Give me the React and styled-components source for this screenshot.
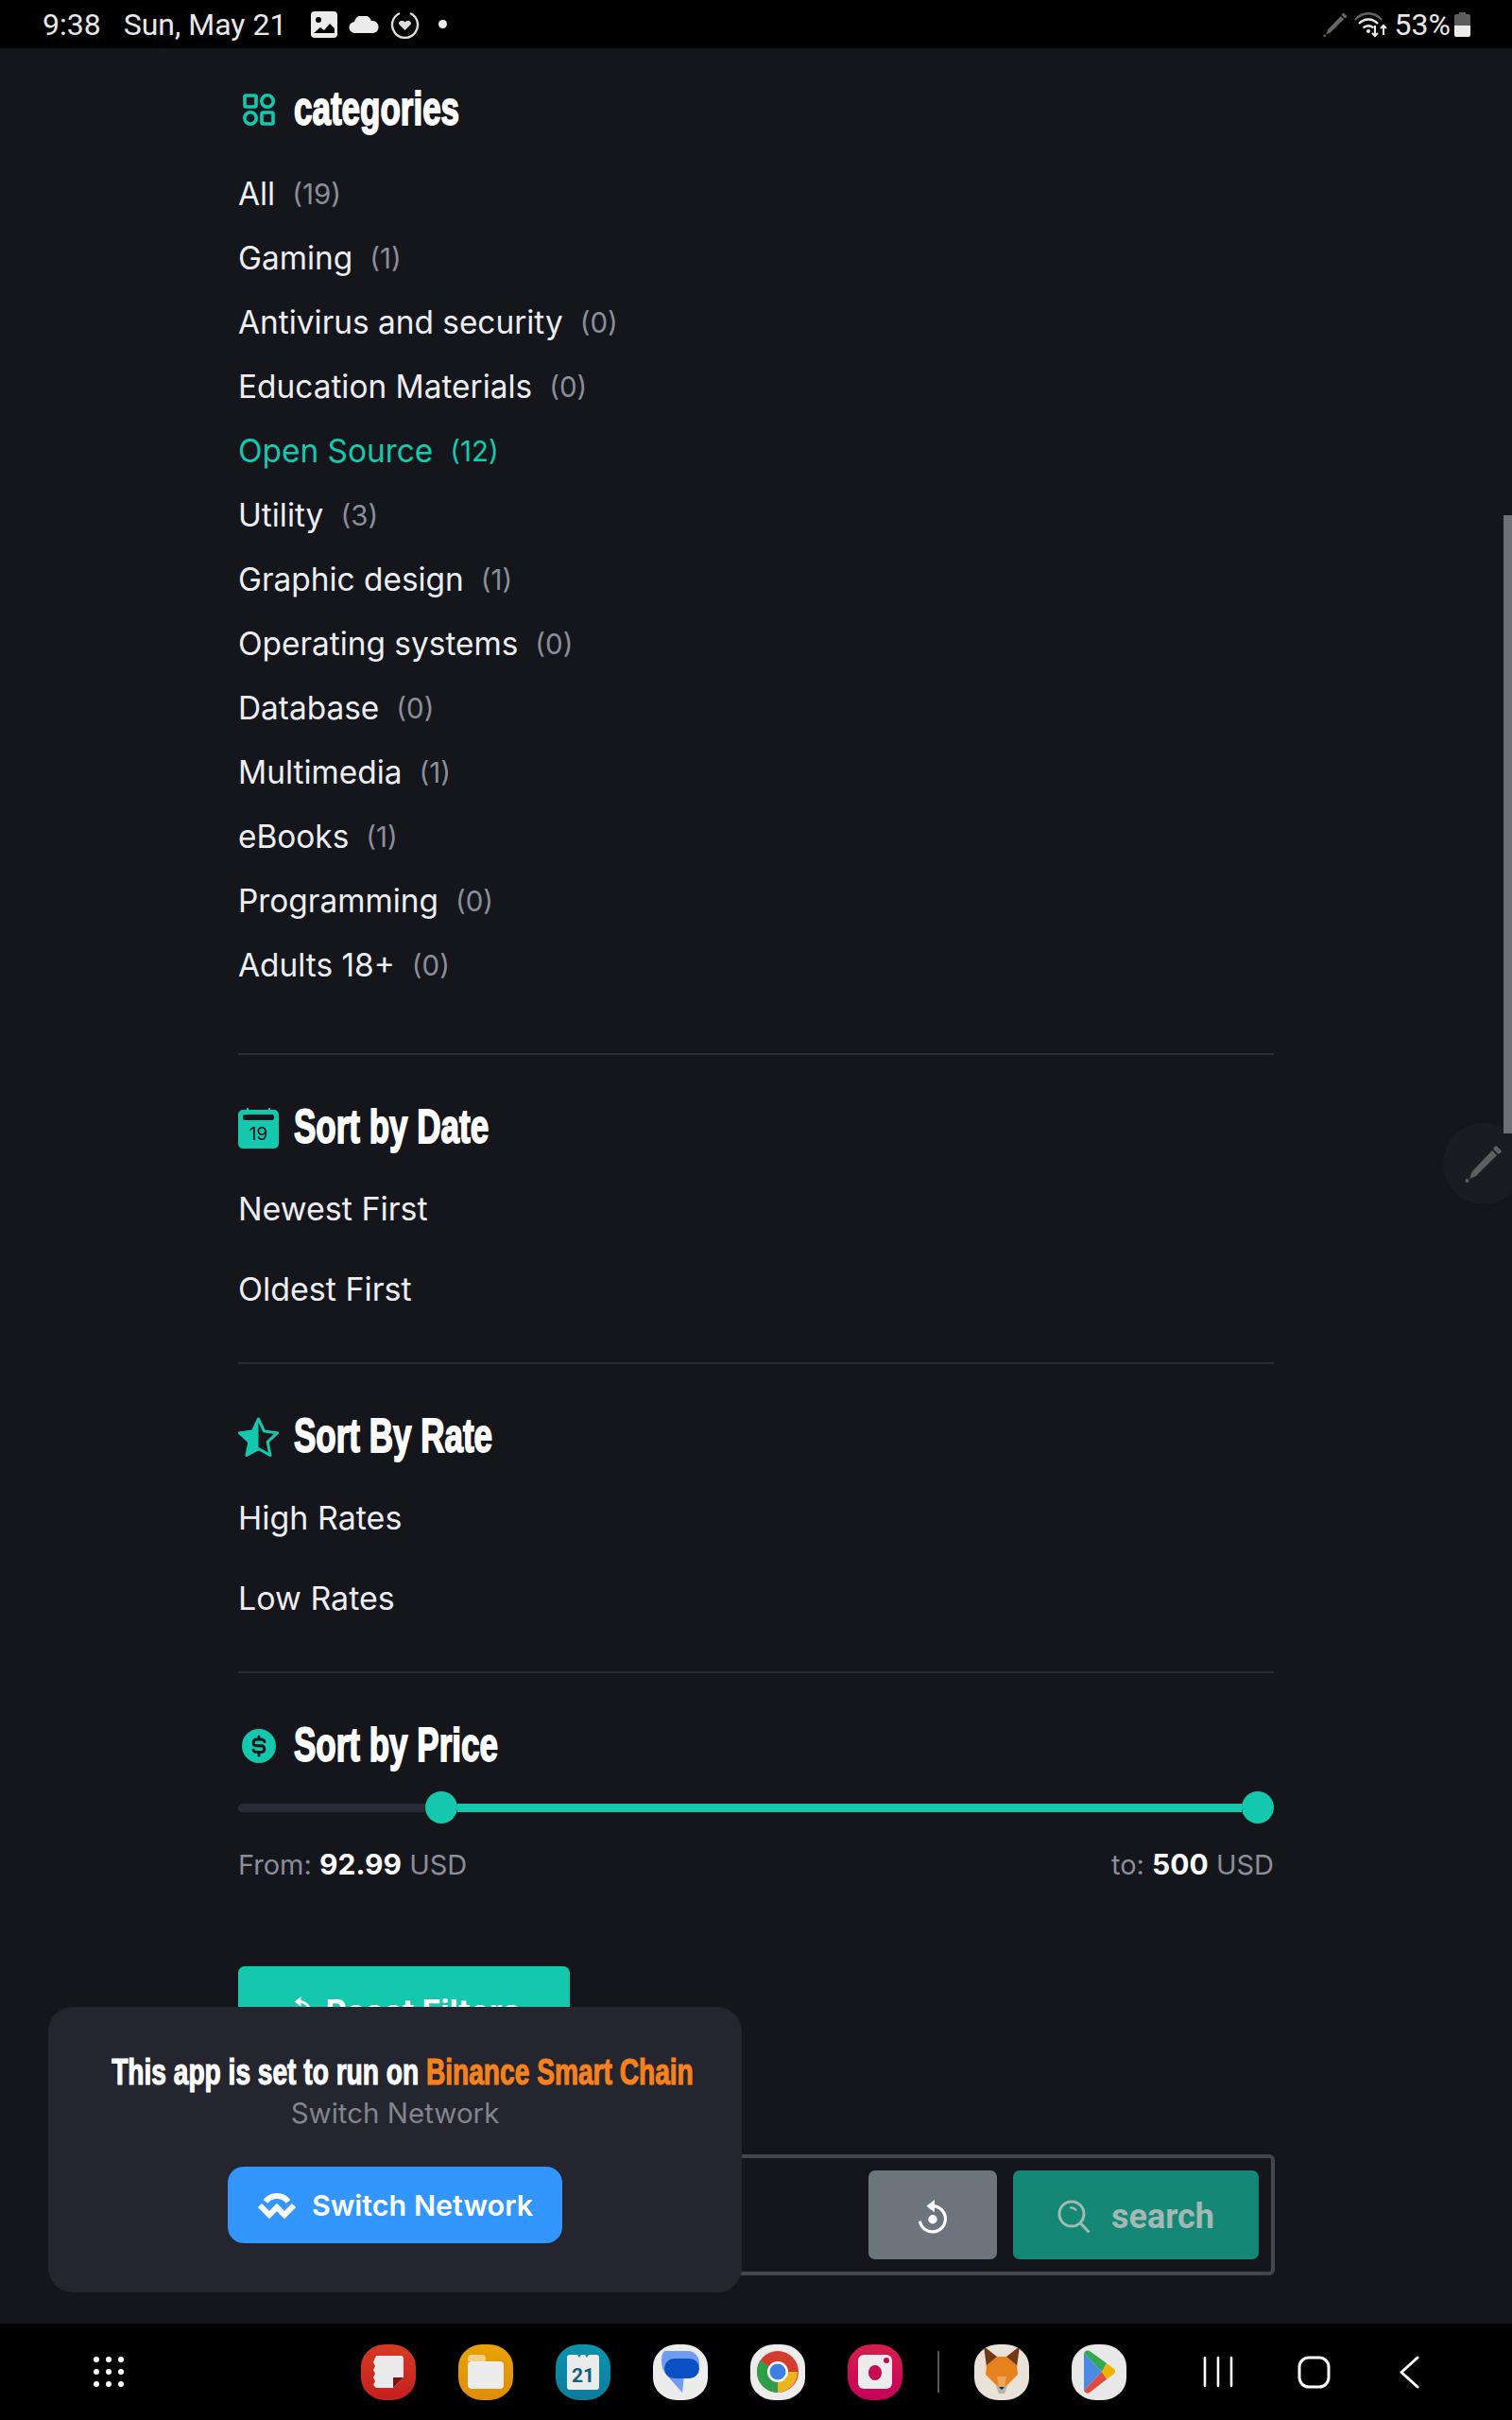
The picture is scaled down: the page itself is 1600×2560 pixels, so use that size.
import styled, { createGlobalStyle } from 'styled-components';

const teal = '#14c8ad';
const pageBg = '#15151c';

const Global = createGlobalStyle`
  html, body { margin: 0; padding: 0; background: ${pageBg}; }
  * { box-sizing: border-box; }
`;

const Screen = styled.div`
  position: relative;
  width: 1600px;
  height: 2560px;
  overflow: hidden;
  display: flex;
  flex-direction: column;
  background: ${pageBg};
  font-family: 'Inter', 'Liberation Sans', sans-serif;
  color: #eceef2;
`;

const StatusBar = styled.div`
  flex: none;
  height: 51px;
  padding: 0 44px 0 45px;
  background: #000;
  display: flex;
  align-items: center;
  justify-content: space-between;
  font-family: 'Roboto', sans-serif;
  font-size: 32px;
  color: #e8e8e8;
`;

const StatusGroup = styled.div`
  display: flex;
  align-items: center;
  gap: ${(p) => p.$gap || 0}px;
`;

const StatusDate = styled.span`
  margin: 0 26px 0 24px;
`;

const StatusDot = styled.i`
  width: 9px;
  height: 9px;
  margin-left: 8px;
  border-radius: 50%;
  background: #eee;
`;

const BatteryLabel = styled.span`
  margin-right: -3px;
`;

const Main = styled.main`
  flex: 1;
  min-height: 0;
  overflow: hidden;
  width: 1096px;
  margin-left: 252px;
`;

const Section = styled.section`
  padding: ${(p) => p.$top}px 0 ${(p) => p.$bottom}px;
  border-bottom: ${(p) => (p.$last ? 'none' : '2px solid #2b2c33')};
`;

const HeadingRow = styled.div`
  height: 60px;
  display: flex;
  align-items: center;
  gap: 16px;
  margin-bottom: ${(p) => p.$mb}px;
`;

const IconBox = styled.div`
  width: 43px;
  height: 43px;
  flex: none;
  display: flex;
  align-items: center;
  justify-content: center;
`;

const Heading = styled.h2`
  margin: -2px 0 0;
  font-family: 'Liberation Sans Narrow', 'Liberation Sans', sans-serif;
  font-weight: 700;
  font-size: 50px;
  line-height: 60px;
  color: #fff;
  white-space: nowrap;
  -webkit-text-stroke: 1.8px #fff;
  transform: scaleX(0.7);
  transform-origin: left center;
`;

const CategoryRow = styled.div`
  height: 68px;
  display: flex;
  align-items: center;
  gap: 18px;
  font-size: 33.4px;
  color: ${(p) => (p.$active ? teal : '#eceef2')};
`;

const Count = styled.span`
  font-size: 29.5px;
  color: ${(p) => (p.$active ? teal : '#8b8e99')};
`;

const SortRow = styled.div`
  height: 85px;
  display: flex;
  align-items: center;
  font-size: 34px;
  color: #eceef2;
`;

const Slider = styled.div`
  height: 34px;
  margin-top: 18px;
  display: flex;
  align-items: center;
`;

const TrackDim = styled.div`
  width: 198px;
  height: 9px;
  border-radius: 5px 0 0 5px;
  background: #2a2b36;
`;

const TrackActive = styled.div`
  flex: 1;
  height: 9px;
  background: ${teal};
`;

const Thumb = styled.div`
  width: 34px;
  height: 34px;
  border-radius: 50%;
  background: ${teal};
`;

const PriceRow = styled.div`
  margin-top: 25px;
  height: 36px;
  display: flex;
  align-items: center;
  justify-content: space-between;
  font-size: 29px;
  color: #8b8e99;
`;

const PriceValue = styled.b`
  font-size: 30px;
  font-weight: 700;
  color: #fff;
`;

const ResetFilters = styled.button`
  display: flex;
  align-items: center;
  justify-content: center;
  gap: 14px;
  width: 351px;
  height: 94px;
  margin-top: 90px;
  padding: 0;
  border: 0;
  border-radius: 7px;
  background: ${teal};
  font-family: inherit;
  font-size: 34px;
  font-weight: 700;
  color: #fff;
`;

const BottomNav = styled.nav`
  flex: none;
  height: 102px;
  background: #000;
  display: flex;
  align-items: center;
  padding-left: 99px;
`;

const DotGrid = styled.div`
  width: 32px;
  display: grid;
  grid-template-columns: repeat(3, 6px);
  justify-content: space-between;
  row-gap: 7px;
  margin-right: 251px;
`;

const Dot = styled.i`
  width: 6px;
  height: 6px;
  border-radius: 50%;
  background: #fff;
`;

const Dock = styled.div`
  display: flex;
  align-items: center;
  gap: 45px;
`;

const AppIcon = styled.div`
  width: 58px;
  height: 59px;
  border-radius: 44% / 40%;
  background: ${(p) => p.$bg};
  display: flex;
  align-items: center;
  justify-content: center;
  overflow: hidden;
`;

const DockDivider = styled.div`
  width: 2px;
  height: 44px;
  margin: 0 -8px;
  background: #555;
`;

const NavButtons = styled.div`
  display: flex;
  align-items: center;
  margin-left: 81px;
`;

const NavSlot = styled.div`
  display: flex;
  margin-right: ${(p) => p.$mr}px;
`;

const Popup = styled.div`
  position: absolute;
  left: 51px;
  top: 2123px;
  width: 734px;
  height: 302px;
  padding-top: 47px;
  border-radius: 26px;
  background: #24252e;
  z-index: 3;
  display: flex;
  flex-direction: column;
  align-items: center;
`;

const PopupTitle = styled.div`
  margin-left: 16px;
  font-family: 'Liberation Sans Narrow', 'Liberation Sans', sans-serif;
  font-weight: 700;
  font-size: 38px;
  line-height: 44px;
  color: #fff;
  white-space: nowrap;
  -webkit-text-stroke: 1.2px currentColor;
  transform: scaleX(0.74);
`;

const Orange = styled.span`
  color: #f5821f;
`;

const PopupSub = styled.div`
  margin-top: 1px;
  font-size: 29.5px;
  line-height: 40px;
  color: #82848e;
`;

const SwitchButton = styled.button`
  margin-top: 37px;
  width: 354px;
  height: 81px;
  padding: 0;
  border: 0;
  border-radius: 17px;
  background: #3396ff;
  color: #fff;
  font-family: inherit;
  font-size: 30.5px;
  font-weight: 600;
  display: flex;
  align-items: center;
  justify-content: center;
  gap: 16px;
`;

const SearchBar = styled.div`
  position: absolute;
  left: 600px;
  right: 251px;
  top: 2279px;
  height: 128px;
  padding-right: 13px;
  border: 4px solid #45464c;
  border-radius: 6px;
  background: ${pageBg};
  z-index: 2;
  display: flex;
  align-items: center;
  justify-content: flex-end;
  gap: 17px;
`;

const ClearButton = styled.button`
  width: 136px;
  height: 94px;
  padding: 6px 0 0;
  border: 0;
  border-radius: 7px;
  background: #6c757d;
  display: flex;
  align-items: center;
  justify-content: center;
`;

const SearchButton = styled.button`
  width: 260px;
  height: 94px;
  padding: 3px 0 0;
  border: 0;
  border-radius: 7px;
  background: #148875;
  color: #a4b8b4;
  font-family: 'Roboto', sans-serif;
  font-size: 36px;
  font-weight: 700;
  display: flex;
  align-items: center;
  justify-content: center;
  gap: 21px;
`;

const PenHandle = styled.div`
  position: absolute;
  left: 1527px;
  top: 1188px;
  width: 86px;
  height: 86px;
  border-radius: 50%;
  background: #1b1c21;
  display: flex;
  align-items: center;
  justify-content: center;
`;

const ScrollThumb = styled.div`
  position: absolute;
  left: 1591px;
  top: 545px;
  width: 9px;
  height: 654px;
  background: #6e6f75;
`;

const categories = [
  ['All', 19],
  ['Gaming', 1],
  ['Antivirus and security', 0],
  ['Education Materials', 0],
  ['Open Source', 12, true],
  ['Utility', 3],
  ['Graphic design', 1],
  ['Operating systems', 0],
  ['Database', 0],
  ['Multimedia', 1],
  ['eBooks', 1],
  ['Programming', 0],
  ['Adults 18+', 0],
];

const CategoriesIcon = () => (
  <svg width="36" height="36" viewBox="0 0 36 36" fill="none" stroke={teal} strokeWidth="3.6">
    <rect x="3" y="3" width="12" height="12" rx="1.5" />
    <circle cx="27" cy="9" r="6.2" />
    <circle cx="9" cy="27" r="6.2" />
    <rect x="21" y="21" width="12" height="12" rx="1.5" />
  </svg>
);

const CalendarIcon = () => (
  <svg width="43" height="43" viewBox="0 0 43 43">
    <path d="M9 0h2v2h21V0h2v2h4a5 5 0 0 1 5 5v31a5 5 0 0 1-5 5H5a5 5 0 0 1-5-5V7a5 5 0 0 1 5-5h4z" fill={teal} />
    <rect x="5" y="7" width="33" height="6" rx="2" fill={pageBg} />
    <text x="21.5" y="33.5" textAnchor="middle" fontFamily="Inter, sans-serif" fontSize="19" fill={pageBg}>19</text>
  </svg>
);

const StarIcon = () => (
  <svg width="43" height="43" viewBox="0 0 43 43">
    <path d="M21.5 2l6 13 14 1.8-10.3 9.6L34 40.5 21.5 33.6 9 40.5l2.8-14.1L1.5 16.8l14-1.8z" fill="none" stroke={teal} strokeWidth="3" strokeLinejoin="round" />
    <path d="M21.5 2l-6 13-14 1.8 10.3 9.6L9 40.5l12.5-6.9z" fill={teal} />
  </svg>
);

const DollarIcon = () => (
  <svg width="36" height="36" viewBox="0 0 36 36">
    <circle cx="18" cy="18" r="18" fill={teal} />
    <path d="M24 13.5c-.5-1.6-2-2.5-4-2.5h-4c-2.2 0-3.8 1.3-3.8 3.4s1.6 3.4 3.8 3.4h4c2.2 0 3.8 1.3 3.8 3.4S22.2 24.600 20 24.600h-4c-2 0-3.500-.9-4-2.500M18 8v3M18 24.600v3.400" fill="none" stroke={pageBg} strokeWidth="3" strokeLinecap="round" />
  </svg>
);

const ResetIcon = ({ size = 32, color = '#fff' }) => (
  <svg width={size} height={size * 1.18} viewBox="0 0 34 40" fill="none">
    <path d="M17 7a14.5 14.5 0 1 1-14.5 17" stroke={color} strokeWidth="3.4" />
    <path d="M19 0v14L10 7z" fill={color} />
    <circle cx="17" cy="22" r="5" fill={color} />
  </svg>
);

const SearchIcon = () => (
  <svg width="36" height="36" viewBox="0 0 36 36" fill="none" stroke="#a4b8b4" strokeWidth="3">
    <circle cx="15" cy="15" r="13" />
    <path d="M24.5 25l9 9.5" />
    <path d="M13 8.5c3-.6 5.5.7 7 3" strokeWidth="2.2" />
  </svg>
);

const PenIcon = ({ size, color }) => (
  <svg width={size} height={size} viewBox="0 0 40 40" fill={color}>
    <path d="M29 6l5 5L12 33l-7 3 3-8z" />
    <rect x="32" y="1" width="5" height="9" rx="2" transform="rotate(-45 34.5 5.5)" />
    <circle cx="2.5" cy="38" r="2" />
  </svg>
);

const WalletLogo = () => (
  <svg width="42" height="30" viewBox="0 0 42 30" fill="none" stroke="#fff" strokeWidth="6">
    <path d="M9 11c6-8 18-8 24 0" />
    <path d="M3 15l10 10 8-8 8 8 10-10" />
  </svg>
);

const StatusIcons = () => (
  <>
    <svg width="28" height="28" viewBox="0 0 28 28">
      <rect width="28" height="28" rx="4" fill="#ececec" />
      <circle cx="8" cy="9" r="3" fill="#000" />
      <path d="M3 23l7-6 4 3 6-7 5 5v5z" fill="#000" />
    </svg>
    <svg width="32" height="18" viewBox="0 0 32 18" fill="#ececec">
      <path d="M7 18a6 6 0 0 1-1-12 9.500 9.500 0 0 1 18-1 6.500 6.500 0 0 1 2 13z" />
    </svg>
    <svg width="31" height="30" viewBox="0 0 31 30" fill="none">
      <path d="M10 3a13.500 13.500 0 1 0 11 0" stroke="#ddd" strokeWidth="2.4" />
      <path d="M15.500 21l-6-6c-2-3 3-6 6-2.500 3-3.500 8-.5 6 2.500z" fill="#ddd" />
    </svg>
  </>
);

const WifiIcon = () => (
  <svg width="36" height="28" viewBox="0 0 36 28" fill="none" strokeWidth="2.4">
    <path d="M1 9c8-9 20-9 28 0" stroke="#666" />
    <path d="M5 13c6-6 14-6 20 0M9.500 17.500c3-3 8-3 11 0" stroke="#eee" />
    <circle cx="15" cy="21" r="2" fill="#eee" />
    <path d="M22 15v11m-3-3l3 3 3-3M31 25V15m-3 3l3-3 3 3" stroke="#eee" strokeWidth="2" />
  </svg>
);

const Battery = () => (
  <svg width="17" height="26" viewBox="0 0 17 26">
    <path d="M5 0h7v2h3a2 2 0 0 1 2 2v10H0V4a2 2 0 0 1 2-2h3z" fill="#5c5c5c" />
    <path d="M0 14h17v10a2 2 0 0 1-2 2H2a2 2 0 0 1-2-2z" fill="#ececec" />
  </svg>
);

const DockIcons = () => (
  <Dock>
    <AppIcon $bg="linear-gradient(#d63a22,#c4201f)">
      <svg width="34" height="34" viewBox="0 0 34 34">
        <path d="M4 0h26a3 3 0 0 1 3 3v20l-11 11H4l-3-3 2-4-2-4 2-4-2-4 2-4-2-4z" fill="#e9e9e9" />
        <path d="M33 23H22v11z" fill="#7a1512" />
      </svg>
    </AppIcon>
    <AppIcon $bg="linear-gradient(#e7a300,#e08c0a)">
      <svg width="38" height="36" viewBox="0 0 38 36">
        <path d="M0 4a4 4 0 0 1 4-4h11a4 4 0 0 1 4 4v3H0z" fill="#f3d08a" />
        <rect y="7" width="38" height="29" rx="4" fill="#ececec" />
      </svg>
    </AppIcon>
    <AppIcon $bg="linear-gradient(#0c93ad,#0e7b9c)">
      <svg width="34" height="38" viewBox="0 0 34 38">
        <path d="M3 1h8l2 3 2-3h4l2 3 2-3h8a3 3 0 0 1 3 3v31a3 3 0 0 1-3 3H3a3 3 0 0 1-3-3V4a3 3 0 0 1 3-3z" fill="#ececec" />
        <text x="17" y="30" textAnchor="middle" fontFamily="Roboto, sans-serif" fontWeight="700" fontSize="21" fill="#0e5f80">21</text>
      </svg>
    </AppIcon>
    <AppIcon $bg="#ececec">
      <svg width="40" height="44" viewBox="0 0 40 44">
        <path d="M4 0h24c7 0 12 6 12 13 0 8-6 13-12 13H24L22 44 6 26C2 22 0 17 0 11 0 6 1 0 4 0z" fill="#6f9bf0" />
        <rect x="3" y="8" width="37" height="21" rx="10.500" fill="#0a4fc4" />
      </svg>
    </AppIcon>
    <AppIcon $bg="#ececec">
      <svg width="44" height="44" viewBox="0 0 44 44">
        <circle cx="22" cy="22" r="22" fill="#d33c2e" />
        <path d="M22 22L3.500 10A22 22 0 0 0 22 44z" fill="#2f9e48" />
        <path d="M22 22h21A22 22 0 0 1 22 44z" fill="#edb51a" />
        <circle cx="22" cy="22" r="11" fill="#fff" />
        <circle cx="22" cy="22" r="8.500" fill="#3d7fe6" />
      </svg>
    </AppIcon>
    <AppIcon $bg="linear-gradient(#d51f4f,#c60058)">
      <svg width="36" height="36" viewBox="0 0 36 36">
        <rect width="36" height="36" rx="6" fill="#ececec" />
        <ellipse cx="18" cy="19" rx="7" ry="8" fill="#c60a50" />
        <circle cx="30" cy="6" r="3" fill="#c60a50" />
      </svg>
    </AppIcon>
    <DockDivider />
    <AppIcon $bg="#e9e2d8">
      <svg width="40" height="54" viewBox="0 0 40 54">
        <path d="M1 0l14 11h10L39 0l-3 22H4z" fill="#6f3b17" />
        <path d="M4 20l11-9h10l11 9 1 10-13 13h-8L3 30z" fill="#e8821e" />
        <path d="M15 32h10l-2 11h-6z" fill="#f2a65a" />
        <path d="M14 42h12l-3 8h-6z" fill="#b8b3ab" />
        <path d="M17 43h6l-3 3z" fill="#222" />
      </svg>
    </AppIcon>
    <AppIcon $bg="#e8e8e8">
      <svg width="34" height="46" viewBox="0 0 34 46">
        <path d="M1 3v40l19-20z" fill="#4a8be8" />
        <path d="M1 3c2-3 4-3 6-2l18 13-5 9z" fill="#34a853" />
        <path d="M25 14l8 6c1.500 1.500 1.500 4 0 5l-8 6-5-8z" fill="#f0b400" />
        <path d="M1 43c2 3 4 3 6 2l18-14-5-8z" fill="#e04b3a" />
      </svg>
    </AppIcon>
  </Dock>
);

const NavIcons = () => (
  <NavButtons>
    <NavSlot $mr={68}>
      <svg width="32" height="34" viewBox="0 0 32 34" stroke="#fff" strokeWidth="2.6" strokeLinecap="round">
        <path d="M2 2v30M16 2v30M30 2v30" />
      </svg>
    </NavSlot>
    <NavSlot $mr={73}>
      <svg width="35" height="35" viewBox="0 0 35 35" fill="none" stroke="#fff" strokeWidth="3">
        <rect x="2" y="2" width="31" height="31" rx="10" />
      </svg>
    </NavSlot>
    <NavSlot>
      <svg width="21" height="35" viewBox="0 0 21 35" fill="none" stroke="#fff" strokeWidth="3" strokeLinecap="round" strokeLinejoin="round">
        <path d="M19 2L2 17.500 19 33" />
      </svg>
    </NavSlot>
  </NavButtons>
);

const App = () => {
  return (
    <Screen>
      <Global />
      <StatusBar>
        <StatusGroup>
          <span>9:38</span>
          <StatusDate>Sun, May 21</StatusDate>
          <StatusGroup $gap={12}>
            <StatusIcons />
            <StatusDot />
          </StatusGroup>
        </StatusGroup>
        <StatusGroup $gap={7}>
          <PenIcon size={26} color="#666" />
          <WifiIcon />
          <BatteryLabel>53%</BatteryLabel>
          <Battery />
        </StatusGroup>
      </StatusBar>

      <Main>
        <Section $top={35} $bottom={59}>
          <HeadingRow $mb={25}>
            <IconBox><CategoriesIcon /></IconBox>
            <Heading>categories</Heading>
          </HeadingRow>
          {categories.map(([name, count, active]) => (
            <CategoryRow key={name} $active={active}>
              <span>{name}</span>
              <Count $active={active}>({count})</Count>
            </CategoryRow>
          ))}
        </Section>

        <Section $top={47} $bottom={35}>
          <HeadingRow $mb={13}>
            <IconBox><CalendarIcon /></IconBox>
            <Heading>Sort by Date</Heading>
          </HeadingRow>
          <SortRow>Newest First</SortRow>
          <SortRow>Oldest First</SortRow>
        </Section>

        <Section $top={47} $bottom={35}>
          <HeadingRow $mb={13}>
            <IconBox><StarIcon /></IconBox>
            <Heading>Sort By Rate</Heading>
          </HeadingRow>
          <SortRow>High Rates</SortRow>
          <SortRow>Low Rates</SortRow>
        </Section>

        <Section $top={47} $bottom={0} $last>
          <HeadingRow $mb={0}>
            <IconBox><DollarIcon /></IconBox>
            <Heading>Sort by Price</Heading>
          </HeadingRow>
          <Slider>
            <TrackDim />
            <Thumb />
            <TrackActive />
            <Thumb />
          </Slider>
          <PriceRow>
            <span>From: <PriceValue>92.99</PriceValue> USD</span>
            <span>to: <PriceValue>500</PriceValue> USD</span>
          </PriceRow>
          <ResetFilters>
            <ResetIcon size={26} />
            Reset Filters
          </ResetFilters>
        </Section>
      </Main>

      <BottomNav>
        <DotGrid>
          {Array.from({ length: 9 }, (_, i) => <Dot key={i} />)}
        </DotGrid>
        <DockIcons />
        <NavIcons />
      </BottomNav>

      <Popup>
        <PopupTitle>This app is set to run on <Orange>Binance Smart Chain</Orange></PopupTitle>
        <PopupSub>Switch Network</PopupSub>
        <SwitchButton>
          <WalletLogo />
          Switch Network
        </SwitchButton>
      </Popup>

      <SearchBar>
        <ClearButton><ResetIcon /></ClearButton>
        <SearchButton>
          <SearchIcon />
          search
        </SearchButton>
      </SearchBar>

      <PenHandle><PenIcon size={40} color="#5e5e62" /></PenHandle>
      <ScrollThumb />
    </Screen>
  );
};

export default App;
